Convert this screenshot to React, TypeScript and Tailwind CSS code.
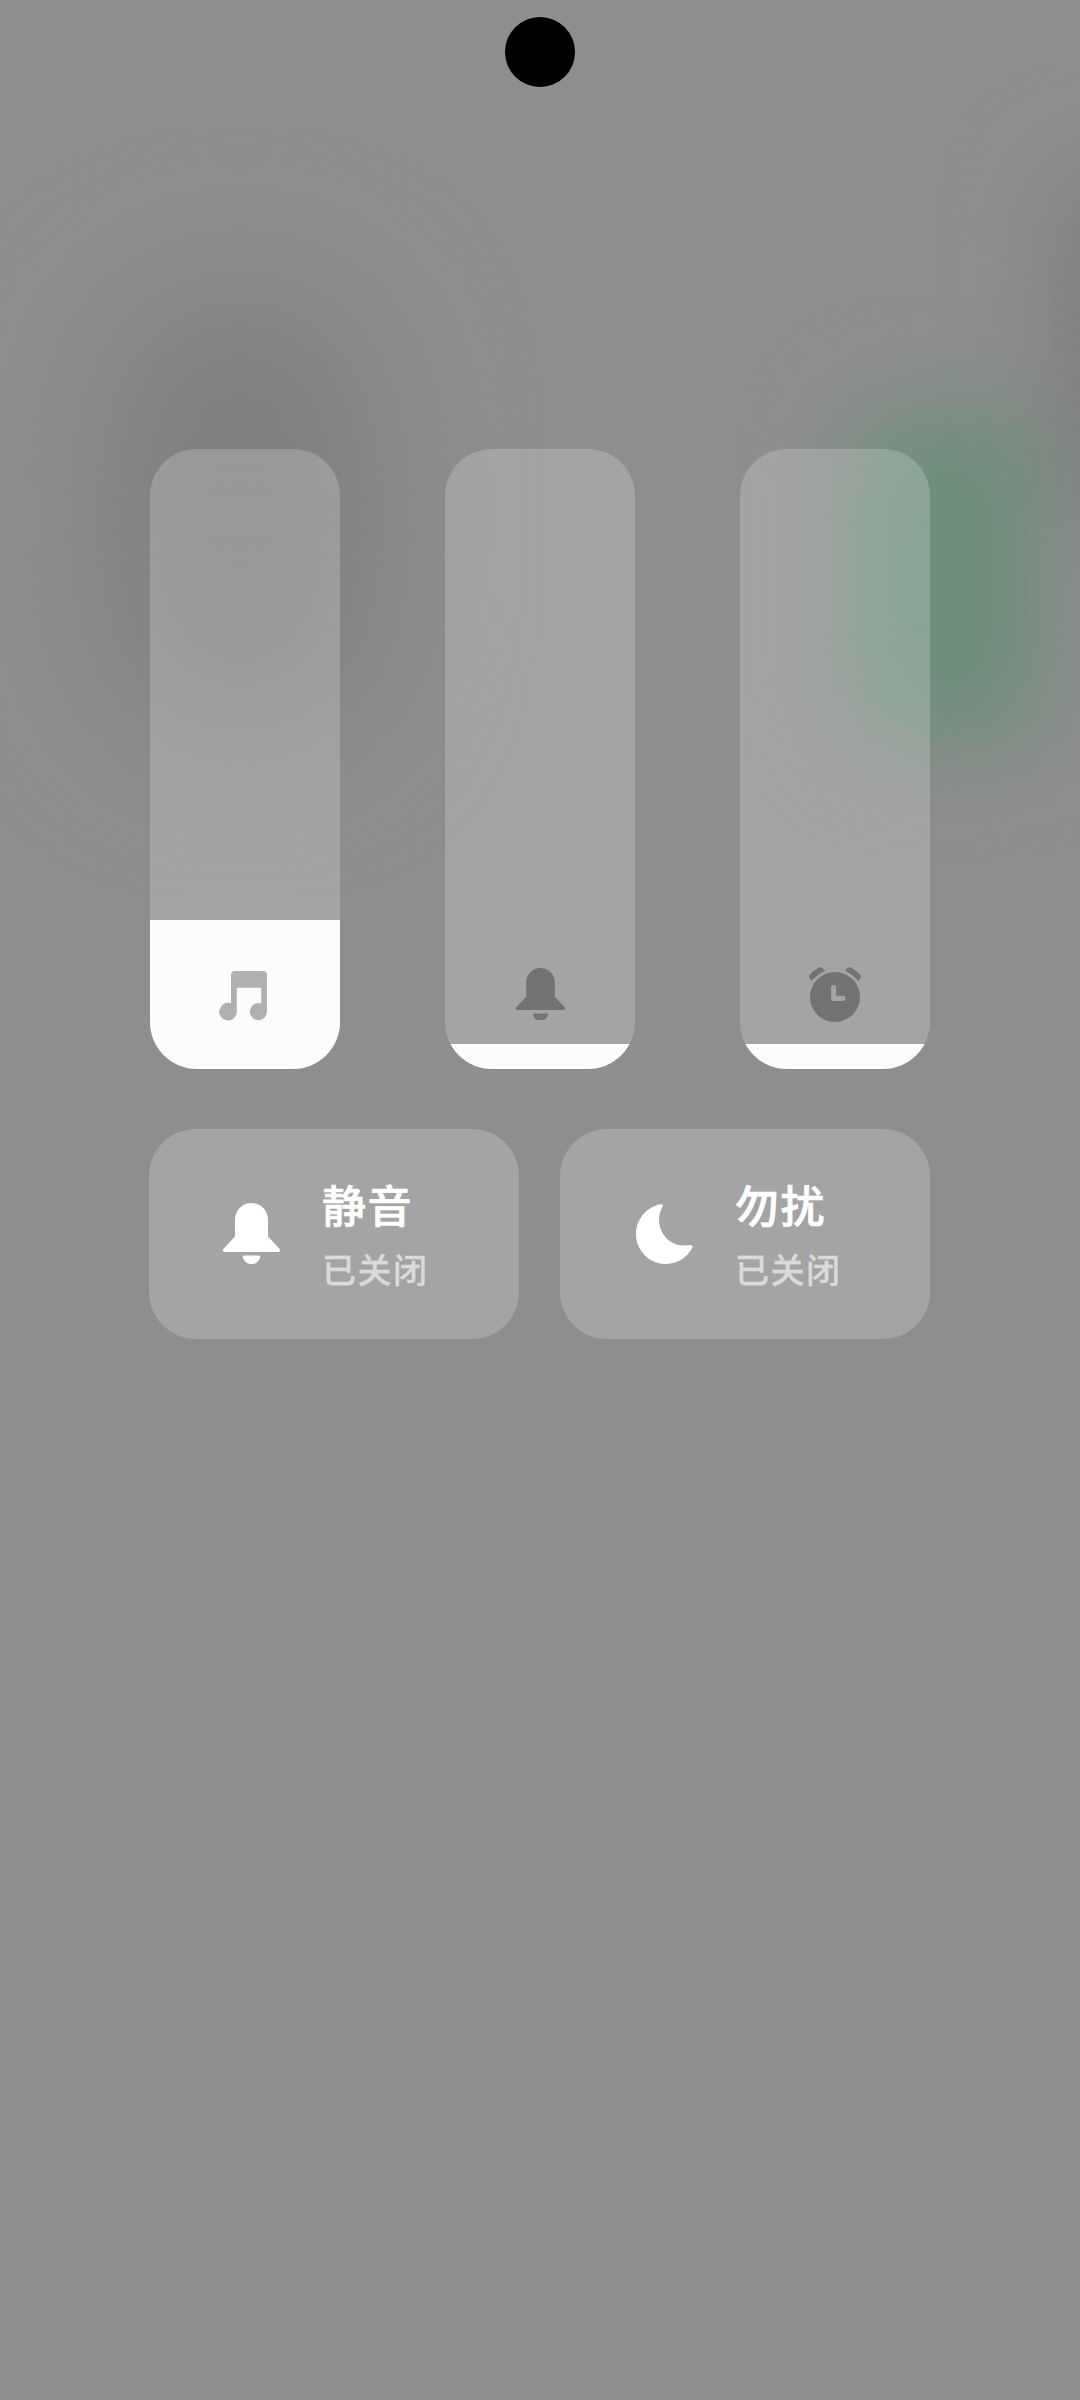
import type { ReactNode } from "react";

function MusicIcon() {
  return (
    <svg className="mt-[4px] mr-[4px] h-[50px] w-[48px]" viewBox="0 0 48 50" fill="#b0b0b0">
      <path d="M12 4Q12 0 16 0H44Q48 0 48 4V40.5A8.6 8.6 0 1 1 42.2 32.4V16.8H17.8V40.5A8.8 8.8 0 1 1 12 32.4Z" />
    </svg>
  );
}

function BellIcon({ className }: { className: string }) {
  return (
    <svg className={className} viewBox="0 0 49 52" fill="currentColor">
      <path d="M10.2 14.3A14.3 14.3 0 0 1 38.8 14.3V28.8L48.5 39Q49.2 40 49 41Q48.7 42 47.5 42H1.5Q.3 42 0 41Q-.2 40 .5 39L10.2 28.8Z" />
      <path d="M18.2 45.5H30.8Q32.2 45.5 32 46.8A7.8 7.8 0 0 1 17 46.8Q16.8 45.5 18.2 45.5Z" />
    </svg>
  );
}

function CardBellIcon() {
  return (
    <svg className="h-[61px] w-[57px]" viewBox="0 0 57 61" fill="white">
      <path d="M12 16.5A16.5 16.5 0 0 1 45 16.5V33.5L56.4 45.7Q57.2 46.8 57 48Q56.5 49 55.3 49H1.7Q.5 49 0 48Q-.2 46.8 .6 45.7L12 33.5Z" />
      <path d="M21.2 52.5H35.8Q37.5 52.5 37.2 54.2A8.9 8.9 0 0 1 19.8 54.2Q19.5 52.5 21.2 52.5Z" />
    </svg>
  );
}

function AlarmIcon() {
  return (
    <svg className="mt-px h-[55px] w-[52px]" viewBox="0 0 52 55" fill="#737373">
      <path
        fillRule="evenodd"
        d="M26 5A25 25 0 1 1 26 55A25 25 0 1 1 26 5ZM24.6 18A2.5 2.5 0 0 0 22.1 20.5V31.3Q22.1 34 24.8 34H33.8A2.5 2.5 0 0 0 33.8 28.7H27.1V20.5A2.5 2.5 0 0 0 24.6 18Z"
      />
      <path d="M2.6 14L.3 10.7Q-.4 9.3 .6 8Q4.500 3 10 .4Q11.600 -.2 13 .8L16.200 3.700Q8 7.300 2.600 14Z" />
      <path d="M49.400 14L51.700 10.700Q52.400 9.300 51.400 8Q47.500 3 42 .4Q40.400 -.2 39 .8L35.800 3.700Q44 7.300 49.400 14Z" />
    </svg>
  );
}

function MoonIcon() {
  return (
    <svg className="mt-px h-[60px] w-[57px]" viewBox="0 0 57 60" fill="white">
      <path d="M24.500 .3C26.500 -.1 27.500 1.300 26.500 3C22.300 9.500 21.800 20 26 28C31.500 38.500 42 43.200 53.500 41C55.800 40.600 57 41.800 56.400 43.600C51.500 53.500 41.500 60 30 60C13.400 60 0 46.600 0 30C0 15.500 10.500 3 24.500 .3Z" />
    </svg>
  );
}

function Slider({ fill, children }: { fill: ReactNode; children: ReactNode }) {
  return (
    <div className="relative flex h-[620px] w-[190px] flex-col justify-end overflow-hidden rounded-[47px] bg-white/[0.195]">
      {fill}
      <div className="absolute inset-x-0 bottom-[47px] flex h-[56px] items-center justify-center">
        {children}
      </div>
    </div>
  );
}

function ToggleCard({ icon, title, gap }: { icon: ReactNode; title: string; gap: string }) {
  return (
    <div className={`flex h-[210px] w-[370px] rounded-[47px] bg-white/[0.195] ${gap}`}>
      <div className="pt-[74px]">{icon}</div>
      <div className="flex flex-col pt-[48px] font-medium whitespace-nowrap">
        <div className="text-[44px] leading-[54px] tracking-[1.500px] text-white [-webkit-text-stroke:0.7px_white]">
          {title}
        </div>
        <div className="mt-[11px] text-[34px] leading-[54px] tracking-[1.500px] text-[#dadada] [-webkit-text-stroke:0.3px_#dadada]">
          已关闭
        </div>
      </div>
    </div>
  );
}

export default function App() {
  return (
    <div className="relative h-[2400px] w-[1080px] overflow-hidden bg-[#8e8e8e] font-['Noto_Sans_CJK_SC',sans-serif]">
      <div className="absolute top-[300px] left-[115px] h-[430px] w-[250px] rounded-[110px] bg-[#7e7e7e] blur-[75px]" />
      <div className="absolute top-[180px] left-[1060px] h-[330px] w-[120px] bg-[#7e7e7e] blur-[50px]" />
      <div className="absolute top-[415px] left-[855px] h-[325px] w-[185px] rounded-[30px] bg-[#6c8e79] blur-[50px]" />

      <div className="relative flex flex-col">
        <div className="mt-[17px] size-[70px] self-center rounded-full bg-black" />
        <div className="mt-[362px] flex justify-between px-[150px]">
          <Slider fill={<div className="h-[149px] bg-[#fcfcfc]" />}>
            <MusicIcon />
          </Slider>
          <Slider fill={<div className="h-[25px] bg-[#fcfcfc]" />}>
            <BellIcon className="h-[52px] w-[49px] text-[#737373]" />
          </Slider>
          <Slider fill={<div className="h-[25px] bg-[#fcfcfc]" />}>
            <AlarmIcon />
          </Slider>
        </div>
        <div className="mt-[60px] flex gap-[41px] pl-[149px]">
          <ToggleCard icon={<CardBellIcon />} title="静音" gap="gap-[42px] pl-[74px]" />
          <ToggleCard icon={<MoonIcon />} title="勿扰" gap="gap-[42px] pl-[76px]" />
        </div>
      </div>
    </div>
  );
}
